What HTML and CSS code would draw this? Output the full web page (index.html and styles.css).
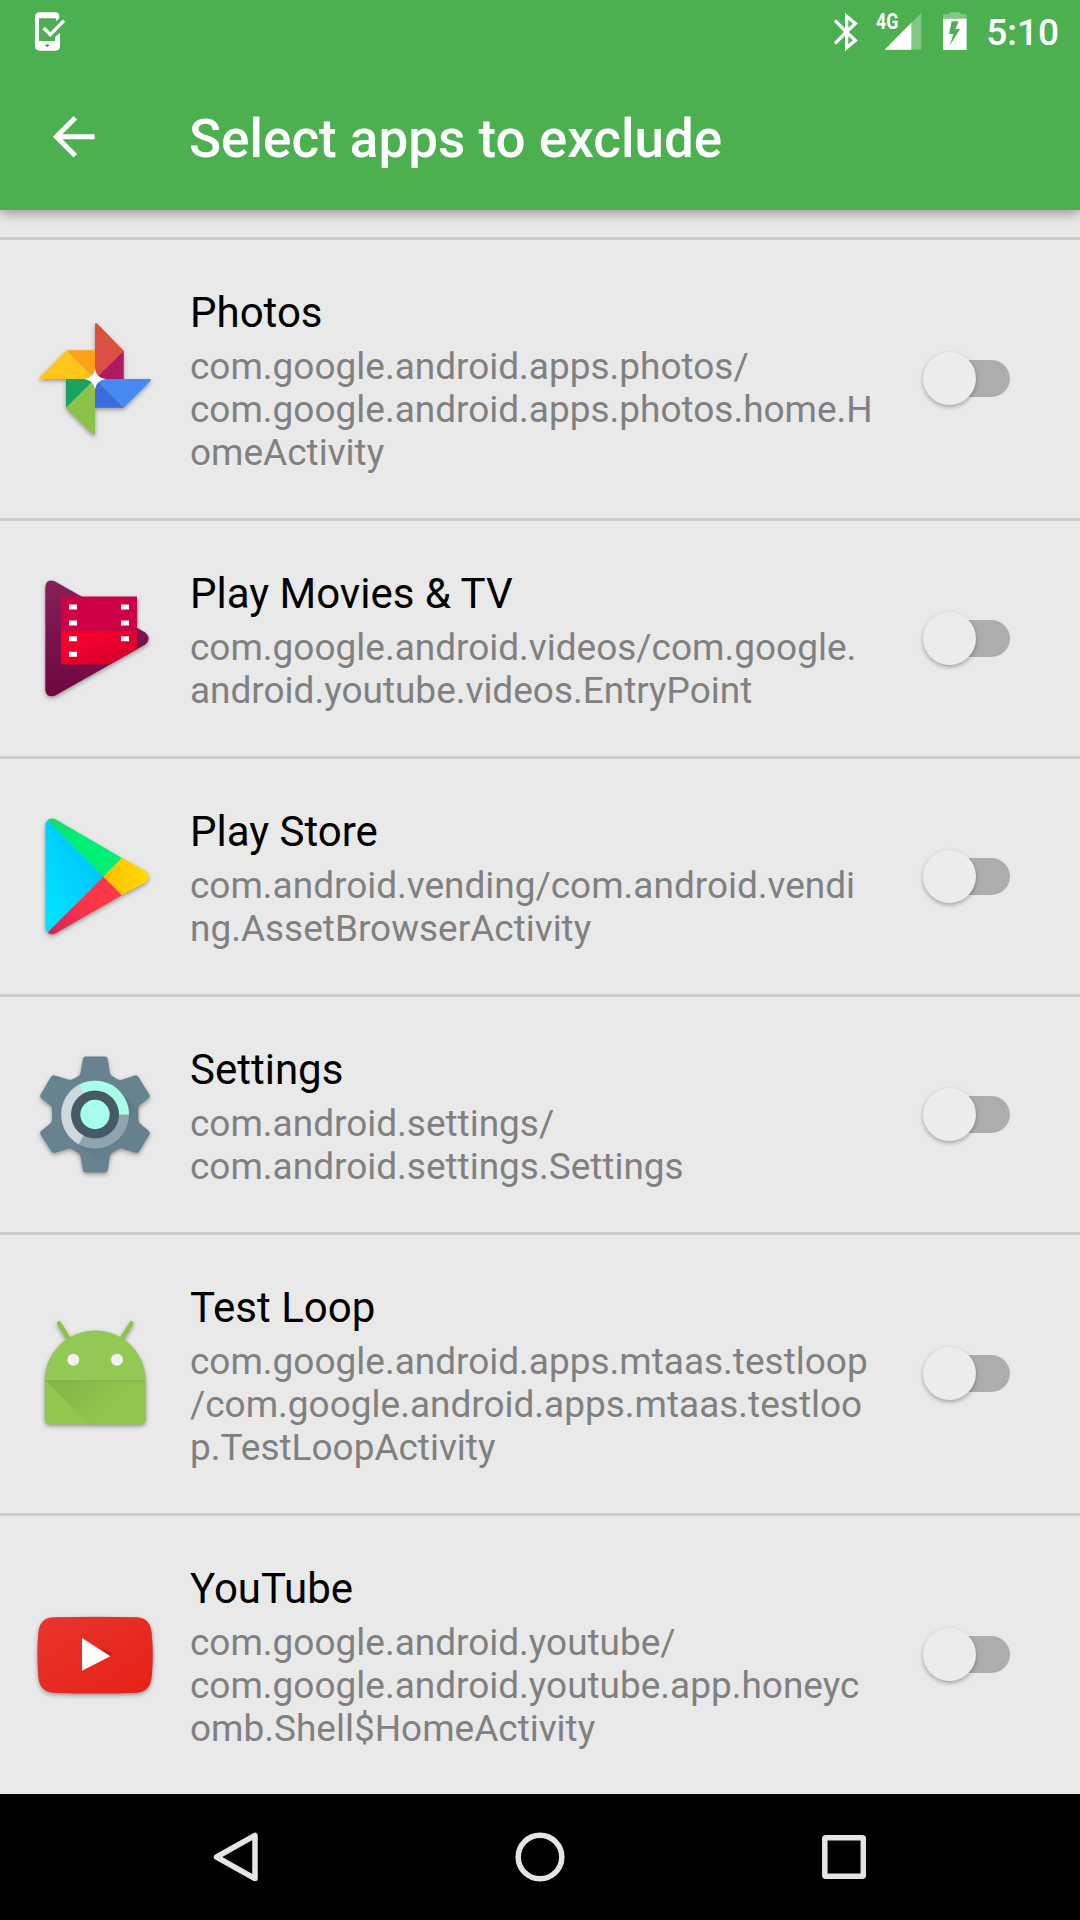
FILE: index.html
```html
<!DOCTYPE html>
<html lang="en">
<head>
<meta charset="utf-8">
<title>Select apps to exclude</title>
<link rel="stylesheet" href="styles.css">
</head>
<body>
<div class="screen">
  <header class="header">
    <div class="status">
      <svg class="status-phone" viewBox="99 0 102 189">
        <path fill="#fff" fill-rule="evenodd" d="M119 37H166Q178 37 178 49V54L168 64V55H117V123H165V111L180 99V138Q180 152 166 152H119Q105 152 105 138V51Q105 37 119 37ZM139 132V135H135V138H139V141H145V138H148V135H145V132Z"/>
        <path fill="none" stroke="#fff" stroke-width="10" d="M131 84L151 104L192 62"/>
      </svg>
      <svg class="status-icons" viewBox="99 0 417 189">
        <path fill="none" stroke="#fff" stroke-width="10" d="M105 61L139 96L105 131M139 96L166 121L140 143V49L166 71L139 96"/>
        <path fill="#fff" fill-opacity=".3" d="M364 38V149H254Z"/>
        <path fill="#fff" d="M334 68V149H254Z"/>
        <text class="network" x="228" y="88" textLength="67" lengthAdjust="spacingAndGlyphs">4G</text>
        <path fill="#fff" fill-opacity=".3" d="M429 56V43H448V37H481V43H500V56Z"/>
        <path fill="#fff" fill-rule="evenodd" d="M429 56H500V150H429ZM455 64L447 102H460L450 136L480 87H466L476 64Z"/>
      </svg>
      <span class="clock">5:10</span>
    </div>
    <div class="toolbar">
      <svg class="back" viewBox="150 337.500 144 144"><path fill="none" stroke="#fff" stroke-width="15" d="M284 409H172M226 352L169 409L226 466"/></svg>
      <h1 class="title">Select apps to exclude</h1>
    </div>
  </header>
  <main class="list">
    <section class="row">
      <svg class="icon" viewBox="0 12 450 450">
        <path fill="#ffc51b" d="M140 151L225 237H61Q56 237 60 232Z"/>
        <path fill="#ffa015" d="M140 151H225V237Z"/>
        <path fill="#dd4f43" d="M225 237V73Q226 66 232 71L311 152Z"/>
        <path fill="#af1b5e" d="M311 152V237H225Z"/>
        <path fill="#4688f4" d="M225 237H389Q396 237 391 243L311 323Z"/>
        <path fill="#3a6ddb" d="M225 237L311 323H225Z"/>
        <path fill="#1ba261" d="M138 237H225L138 323Z"/>
        <path fill="#8bc34a" d="M225 237V401Q223 407 217 402L138 323Z"/>
        <path fill="#fff" d="M225 206Q229 233 257 237Q229 241 225 268Q221 241 193 237Q221 233 225 206Z"/>
      </svg>
      <div class="text"><h2 class="name">Photos</h2><p class="component">com.google.android.apps.photos/<br>com.google.android.apps.photos.home.H<br>omeActivity</p></div>
      <span class="switch"></span>
    </section>
    <section class="row">
      <svg class="icon" viewBox="0 10.5 450 450">
        <defs>
          <linearGradient id="plum" x1="0" y1="0" x2="0" y2="1"><stop offset="0" stop-color="#85205a"/><stop offset="1" stop-color="#6f063f"/></linearGradient>
          <linearGradient id="film" x1="0" y1="0" x2="1" y2="1"><stop offset=".3" stop-color="#f5002d"/><stop offset="1" stop-color="#c9002f"/></linearGradient>
        </defs>
        <path fill="url(#plum)" d="M76 80Q77 53 104 62L376 216Q396 234 376 252L106 405Q80 414 76 389Z"/>
        <path fill="#ce0046" d="M123 108H351V210H123Z"/>
        <path fill="url(#film)" d="M123 210H351V266L268 312H123Z"/>
        <path fill="#fff" d="M147 132h24v15h-24zM303 132h24v15h-24zM147 180h24v15h-24zM303 180h24v15h-24zM147 227h24v15h-24zM303 227h24v15h-24zM147 274h24v15h-24z"/>
      </svg>
      <div class="text"><h2 class="name">Play Movies &amp; TV</h2><p class="component">com.google.android.videos/com.google.<br>android.youtube.videos.EntryPoint</p></div>
      <span class="switch"></span>
    </section>
    <section class="row">
      <svg class="icon" viewBox="0 4.5 450 450">
        <defs>
          <linearGradient id="cyan" x1="1" y1="0" x2="0" y2="1"><stop offset="0" stop-color="#00baff"/><stop offset="1" stop-color="#00e7ff"/></linearGradient>
          <linearGradient id="red" x1="1" y1="0" x2="0" y2="1"><stop offset="0" stop-color="#ff3a44"/><stop offset=".5" stop-color="#f93648"/><stop offset="1" stop-color="#d22457"/></linearGradient>
          <linearGradient id="green" x1="0" y1="0" x2="1" y2="1"><stop offset="0" stop-color="#12d970"/><stop offset=".4" stop-color="#00f076"/></linearGradient>
          <linearGradient id="gold" x1="0" x2="1"><stop offset="0" stop-color="#ffbd00"/><stop offset="1" stop-color="#ffdc00"/></linearGradient>
        </defs>
        <path fill="url(#cyan)" d="M82 60L250 229L83 396Q76 390 76 381V75Q77 65 82 60Z"/>
        <path fill="url(#green)" d="M82 60Q90 51 106 56L305 172L250 229Z"/>
        <path fill="url(#gold)" d="M305 172L376 211Q397 229 376 246L305 284L250 229Z"/>
        <path fill="url(#red)" d="M83 396L250 229L305 284L107 398Q92 405 83 396Z"/>
      </svg>
      <div class="text"><h2 class="name">Play Store</h2><p class="component">com.android.vending/com.android.vendi<br>ng.AssetBrowserActivity</p></div>
      <span class="switch"></span>
    </section>
    <section class="row">
      <svg class="icon" viewBox="0 -1.5 450 450">
        <defs><linearGradient id="cast" gradientUnits="userSpaceOnUse" x1="200" y1="200" x2="310" y2="310"><stop offset="0" stop-color="#3d5561"/><stop offset="1" stop-color="#546e7a" stop-opacity=".1"/></linearGradient></defs>
        <path fill="#678390" d="M189 55Q190 48 197 48H255Q262 48 263 55L270 99Q273 105 280 109L293 116Q300 120 307 117L344 105Q351 103 355 109L388 162Q391 168 386 173L359 195Q355 199 355 206V237Q355 244 360 249L386 271Q392 276 388 283L358 332Q354 338 346 337L305 324Q299 323 292 328L278 336Q272 340 270 346L263 389Q262 396 255 396H197Q190 396 189 389L181 346Q179 340 173 336L159 328Q152 323 145 325L105 337Q98 339 94 332L62 283Q58 276 64 271L91 249Q96 244 96 237V206Q96 199 91 195L64 173Q58 168 62 162L93 109Q97 103 105 105L145 117Q151 119 158 116L173 108Q179 105 181 99Z"/>
        <path fill="url(#cast)" opacity=".55" d="M297 150L355 206V237Q355 244 360 249L386 271L358 332L305 324L270 346L263 389L175 309Z"/>
        <circle cx="225" cy="222" r="102" fill="#90a4ae"/>
        <path fill="#cfd8dc" d="M225 222L176 133A102 102 0 0 0 176 311Z"/>
        <path fill="#a7ffeb" d="M225 222L176 133A102 102 0 0 1 327 222Z"/>
        <circle cx="225" cy="222" r="72" fill="#455a64"/>
        <circle cx="225" cy="222" r="44" fill="#a7ffeb"/>
      </svg>
      <div class="text"><h2 class="name">Settings</h2><p class="component">com.android.settings/<br>com.android.settings.Settings</p></div>
      <span class="switch"></span>
    </section>
    <section class="row">
      <svg class="icon" viewBox="0 -3 450 450">
        <defs><linearGradient id="fold" gradientUnits="userSpaceOnUse" x1="150" y1="245" x2="240" y2="330"><stop offset="0" stop-color="#84b749"/><stop offset="1" stop-color="#8dc54d"/></linearGradient></defs>
        <path fill="none" stroke="#8bc34a" stroke-width="13" stroke-linecap="round" d="M117 70L148 120M334 70L303 120"/>
        <path fill="#93c855" d="M74 242A151 150 0 0 1 377 242Z"/>
        <path fill="#8fc74f" d="M74 242H377V357Q377 373 361 373H90Q74 373 74 357Z"/>
        <path fill="url(#fold)" d="M78 243H377V357Q377 373 361 373H208Z"/>
        <path fill="#7fb048" d="M74 241h303v3H74z"/>
        <circle cx="160" cy="179" r="18" fill="#f1f1f1"/><circle cx="291" cy="179" r="18" fill="#f1f1f1"/>
      </svg>
      <div class="text"><h2 class="name">Test Loop</h2><p class="component">com.google.android.apps.mtaas.testloop<br>/com.google.android.apps.mtaas.testloo<br>p.TestLoopActivity</p></div>
      <span class="switch"></span>
    </section>
    <section class="row">
      <svg class="icon" viewBox="0 -30 450 450">
        <defs><linearGradient id="tube" x1="0" y1="0" x2="1" y2="1"><stop offset="0" stop-color="#e8352d"/><stop offset="1" stop-color="#e62117"/></linearGradient></defs>
        <path fill="url(#tube)" d="M98 82Q225 78 352 82Q390 84 395 128Q402 195 395 262Q390 306 352 308Q225 313 98 308Q60 306 55 262Q49 195 55 128Q60 84 98 82Z"/>
        <path fill="#c4201a" d="M240 173L278 190L268 202Z"/>
        <path fill="#fff" d="M186 144L271 199L186 242Z"/>
      </svg>
      <div class="text"><h2 class="name">YouTube</h2><p class="component">com.google.android.youtube/<br>com.google.android.youtube.app.honeyc<br>omb.Shell$HomeActivity</p></div>
      <span class="switch"></span>
    </section>
  </main>
  <nav class="nav">
    <svg viewBox="0 0 60 60"><path d="M10.500 30L49 8.500V51.500Z"/></svg>
    <svg viewBox="0 0 60 60"><circle cx="30" cy="30" r="21.800"/></svg>
    <svg viewBox="0 0 60 60"><rect x="10.800" y="10.800" width="38.500" height="38.500" rx="1"/></svg>
  </nav>
</div>
</body>
</html>
```
FILE: styles.css
```css
* { box-sizing: border-box; }
body { margin: 0; background: #e9e9e9; font-family: Roboto, sans-serif; }
h1, h2, p { margin: 0; font-weight: 400; }
svg { display: block; flex: none; }

.screen { width: 1080px; height: 1920px; display: flex; flex-direction: column; overflow: hidden; }

.header { flex: none; height: 210px; background: #4caf50; color: #fff; box-shadow: 0 3px 12px rgba(0, 0, 0, .38); }
.status { height: 63px; display: flex; padding: 0 21px 0 33px; }
.status-phone { width: 34px; height: 63px; margin-right: auto; }
.status-icons { width: 139px; height: 63px; }
.network { font: 700 64px Roboto, sans-serif; fill: #fff; }
.clock { margin-left: 14px; font-size: 37px; font-weight: 500; line-height: 66px; }
.toolbar { height: 147px; display: flex; align-items: center; padding-left: 50px; }
.back { width: 48px; height: 48px; }
.title { margin-left: 91px; font-size: 53px; font-weight: 500; line-height: 62px; padding-top: 5px; }

.list { flex: none; height: 1584px; padding-top: 27px; }
.row { display: flex; align-items: center; border-top: 3px solid #cdcdcd; padding-left: 20px; padding-right: 70px; }
.icon { width: 150px; height: 150px; filter: drop-shadow(0 2px 2px rgba(0, 0, 0, .35)); }
.text { flex: none; width: 700px; margin-left: 20px; padding: 48px 0 44px; white-space: nowrap; }
.name { font-size: 42px; line-height: 49px; color: #000; margin-bottom: 8px; }
.component { font-size: 36.97px; line-height: 43px; color: #808080; }

.switch { position: relative; width: 80px; height: 37px; margin-left: auto; margin-bottom: 1px; border-radius: 19px; background: linear-gradient(90deg, transparent 30px, #adadad 30px); }
.switch::before { content: ""; position: absolute; left: -7px; top: -8px; width: 53px; height: 53px; border-radius: 50%; background: #ececec; box-shadow: 0 2px 4px rgba(0, 0, 0, .3); }

.nav { flex: none; height: 126px; display: flex; justify-content: center; align-items: center; gap: 244px; background: #000; }
.nav svg { width: 60px; height: 60px; fill: none; stroke: #e5e5e5; stroke-width: 5.5; stroke-linejoin: round; }
```
